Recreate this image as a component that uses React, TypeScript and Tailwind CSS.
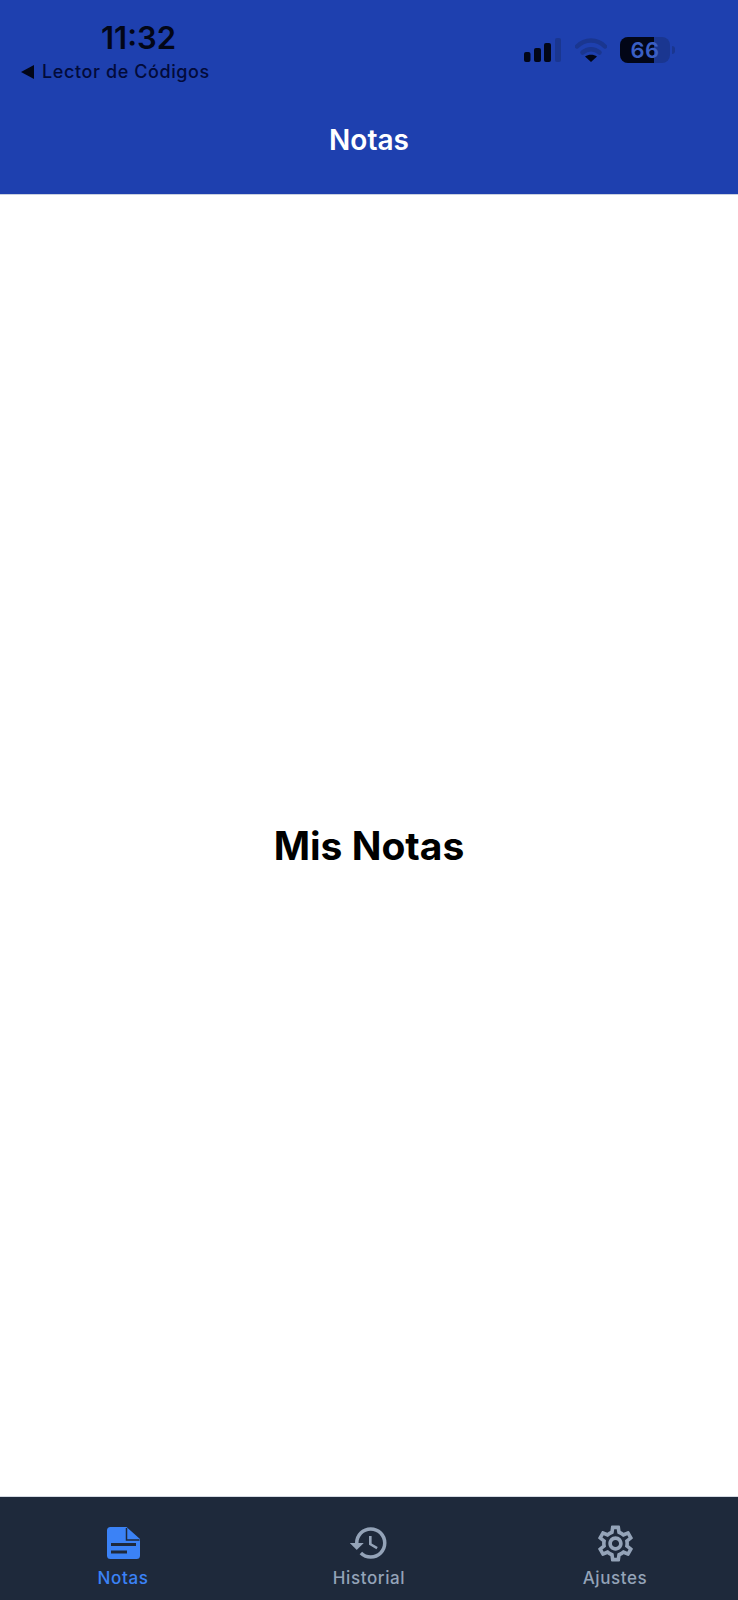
import { MdHistory, MdOutlineSettings } from "react-icons/md";

const font = "font-['Inter',_'Liberation_Sans',_sans-serif]";

function StatusIcons() {
  return (
    <div className="flex items-center">
      {/* signal */}
      <svg width="37" height="24" viewBox="0 0 37 24" className="mr-[14px]">
        <rect x="0" y="14" width="6.5" height="10" rx="2" fill="#020617" />
        <rect x="10" y="10" width="7" height="14" rx="2" fill="#020617" />
        <rect x="20" y="5" width="7" height="19" rx="2" fill="#020617" />
        <rect x="31" y="0" width="6" height="24" rx="2" fill="#1a3690" />
      </svg>
      {/* wifi */}
      <svg width="32" height="24" viewBox="0 0 32 24" className="mr-[13px]">
        <path d="M2 8.5C10 0.5 22 0.5 30 8.5" fill="none" stroke="#1a3690" strokeWidth="4.5" strokeLinecap="round" />
        <path d="M7.5 14.5C12.5 10 19.5 10 24.5 14.5" fill="none" stroke="#1a3690" strokeWidth="4.5" strokeLinecap="round" />
        <path d="M10 18.5L16 24L22 18.5C18.5 16.2 13.5 16.2 10 18.5Z" fill="#020617" />
      </svg>
      {/* battery */}
      <div className="relative flex h-[26px] w-[50px] items-center justify-center rounded-[8px] bg-[#1a3690]">
        <div className="absolute inset-y-0 left-0 w-[34px] rounded-l-[8px] bg-[#020617]" />
        <span className="relative text-[22px] font-semibold leading-[26px] tracking-[0.5px] text-[#3a5fc4]">66</span>
      </div>
      <div className="ml-[2px] h-[8px] w-[3px] rounded-r-sm bg-[#1a3690]" />
    </div>
  );
}

function NoteIcon() {
  return (
    <svg width="33" height="32" viewBox="0 0 33 32">
      <path d="M3.5 0H19.5L33 12V28.5A3.500 3.500 0 0 1 29.500 32H3.500A3.500 3.500 0 0 1 0 28.500V3.500A3.500 3.500 0 0 1 3.500 0Z" fill="#3b82f6" />
      <path d="M19.500 1V13H32.500" fill="none" stroke="#1e293b" strokeWidth="1.500" />
      <path d="M4 17.500H29" stroke="#1e293b" strokeWidth="3" />
      <path d="M4 25H20" stroke="#1e293b" strokeWidth="3" />
    </svg>
  );
}

function Tab({ icon, label, active }: { icon: React.ReactNode; label: string; active?: boolean }) {
  return (
    <div className={`flex flex-col items-center ${active ? "text-[#3b82f6]" : "text-[#94a3b8]"}`}>
      <div className="flex h-[42px] items-center justify-center">{icon}</div>
      <span className="mt-[3px] text-[17px] font-[450] leading-[22px] tracking-[0.6px]">{label}</span>
    </div>
  );
}

export default function App() {
  return (
    <div className={`flex h-[1600px] w-[738px] flex-col bg-white ${font}`}>
      <header className="h-[195px] border-b border-[#c8d0e0] bg-[#1e40af]">
        <div className="flex items-start justify-between pt-[19px] pl-[21px] pr-[63px]">
          <div className="flex flex-col">
            <span className="ml-[80px] text-[31px] font-semibold leading-[37px] text-[#020617]">11:32</span>
            <span className="mt-[4px] flex items-center text-[18px] font-medium leading-[24px] tracking-[0.6px] text-[#020b3a]">
              <span className="mr-[8px] h-0 w-0 border-y-[7px] border-r-[13px] border-y-transparent border-r-[#020617]" />
              Lector de Códigos
            </span>
          </div>
          <div className="pt-[18px]">
            <StatusIcons />
          </div>
        </div>
        <h1 className="mt-[38px] text-center text-[28px] font-semibold leading-[36px] text-white">Notas</h1>
      </header>

      <main className="flex flex-1 items-center justify-center">
        <h2 className="text-[39px] font-bold leading-[48px] text-black">Mis Notas</h2>
      </main>

      <nav className="grid h-[104px] grid-cols-3 border-t border-[#d5dae3] bg-[#1e293b] pt-[25px]">
        <Tab active label="Notas" icon={<NoteIcon />} />
        <Tab label="Historial" icon={<MdHistory size={42} />} />
        <Tab label="Ajustes" icon={<MdOutlineSettings size={43} />} />
      </nav>
    </div>
  );
}
